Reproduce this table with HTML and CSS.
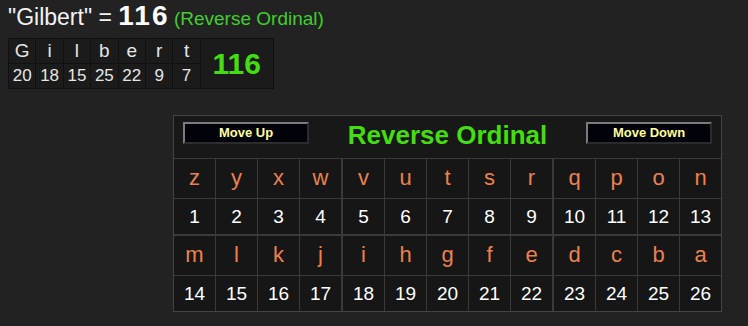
FILE: index.html
```html
<!DOCTYPE html>
<html lang="en">
<head>
<meta charset="utf-8">
<title>Gilbert - Reverse Ordinal</title>
<link rel="stylesheet" href="styles.css">
</head>
<body>
<div class="page">
  <div class="headline">
    <span class="phrase">"Gilbert" = </span><span class="total">116</span> <span class="cipher-name">(Reverse Ordinal)</span>
  </div>

  <div class="breakdown">
    <div class="bd-l">G</div><div class="bd-l">i</div><div class="bd-l">l</div><div class="bd-l">b</div><div class="bd-l">e</div><div class="bd-l">r</div><div class="bd-l">t</div>
    <div class="bd-sum">116</div>
    <div class="bd-n">20</div><div class="bd-n">18</div><div class="bd-n">15</div><div class="bd-n">25</div><div class="bd-n">22</div><div class="bd-n">9</div><div class="bd-n">7</div>
  </div>

  <div class="cipher">
    <div class="cipher-head">
      <button class="move-btn" type="button">Move Up</button>
      <div class="cipher-title">Reverse Ordinal</div>
      <button class="move-btn" type="button">Move Down</button>
    </div>
    <div class="ch">z</div><div class="ch">y</div><div class="ch">x</div><div class="ch">w</div><div class="ch">v</div><div class="ch">u</div><div class="ch">t</div><div class="ch">s</div><div class="ch">r</div><div class="ch">q</div><div class="ch">p</div><div class="ch">o</div><div class="ch">n</div>
    <div class="val">1</div><div class="val">2</div><div class="val">3</div><div class="val">4</div><div class="val">5</div><div class="val">6</div><div class="val">7</div><div class="val">8</div><div class="val">9</div><div class="val">10</div><div class="val">11</div><div class="val">12</div><div class="val">13</div>
    <div class="ch">m</div><div class="ch">l</div><div class="ch">k</div><div class="ch">j</div><div class="ch">i</div><div class="ch">h</div><div class="ch">g</div><div class="ch">f</div><div class="ch">e</div><div class="ch">d</div><div class="ch">c</div><div class="ch">b</div><div class="ch">a</div>
    <div class="val">14</div><div class="val">15</div><div class="val">16</div><div class="val">17</div><div class="val">18</div><div class="val">19</div><div class="val">20</div><div class="val">21</div><div class="val">22</div><div class="val">23</div><div class="val">24</div><div class="val">25</div><div class="val">26</div>
  </div>
</div>
</body>
</html>
```

FILE: styles.css
```css
html, body {
  margin: 0;
  padding: 0;
  background: #222222;
  font-family: "Liberation Sans", Arial, sans-serif;
  color: #eeeeee;
}

.page {
  padding: 0 8px;
}

/* phrase total line */
.headline {
  line-height: 30px;
  white-space: nowrap;
}
.phrase {
  font-size: 23px;
  color: #f2f2f2;
}
.total {
  font-size: 28px;
  line-height: 31px;
  font-weight: bold;
  letter-spacing: 2px;
  color: #ffffff;
}
.cipher-name {
  font-size: 19px;
  color: #3fcf2f;
}

/* letter-by-letter breakdown */
.breakdown {
  margin-top: 3px;
  display: inline-grid;
  grid-template-columns: repeat(7, 26.4px) 72px;
  grid-template-rows: 24px 24px;
  gap: 1px;
  padding: 1px;
  background: #111111;
}
.bd-l, .bd-n {
  background: #1b1b1b;
  display: flex;
  align-items: center;
  justify-content: center;
  color: #e6e6e6;
}
.bd-l {
  font-size: 19px;
}
.bd-n {
  font-size: 17px;
}
.bd-sum {
  grid-column: 8;
  grid-row: 1 / span 2;
  background: #1b1b1b;
  display: flex;
  align-items: center;
  justify-content: center;
  font-size: 30px;
  font-weight: bold;
  color: #44dd11;
}

/* cipher chart */
.cipher {
  margin: 26px 0 0 165px;
  width: max-content;
  display: grid;
  grid-template-columns:
    repeat(4, 41px) 42px repeat(4, 41px) 42px repeat(3, 41px);
  grid-template-rows: 42px 39px 35px 40px 35px;
  gap: 1px;
  border: 1px solid #444444;
  background: #3a3a3a;
}
.cipher-head {
  grid-column: 1 / -1;
  background: #181818;
  display: flex;
  justify-content: space-between;
  align-items: flex-start;
  padding: 6px 9px 0 9px;
}
.move-btn {
  width: 126px;
  height: 22px;
  padding: 0;
  background: #02020a;
  border-style: solid;
  border-width: 2px;
  border-color: #7c7c7c #2c2c2c #2c2c2c #7c7c7c;
  font-family: "Liberation Sans", Arial, sans-serif;
  font-size: 13px;
  font-weight: bold;
  color: #ffff99;
  line-height: 18px;
}
.cipher-title {
  align-self: center;
  margin-top: -9px;
  font-size: 26px;
  font-weight: bold;
  color: #44dd11;
}
.ch, .val {
  background: #161616;
  display: flex;
  align-items: center;
  justify-content: center;
}
.ch {
  font-size: 22px;
  color: #ec8150;
  padding-bottom: 2px;
}
.val {
  font-size: 19px;
  color: #ffffff;
}
/* heavier rules between column groups and between the two halves */
.cipher > :nth-child(13n+6),
.cipher > :nth-child(13n+11) {
  margin-left: 1px;
}
.cipher > :nth-child(n+28):nth-child(-n+40) {
  margin-top: 1px;
}
```
